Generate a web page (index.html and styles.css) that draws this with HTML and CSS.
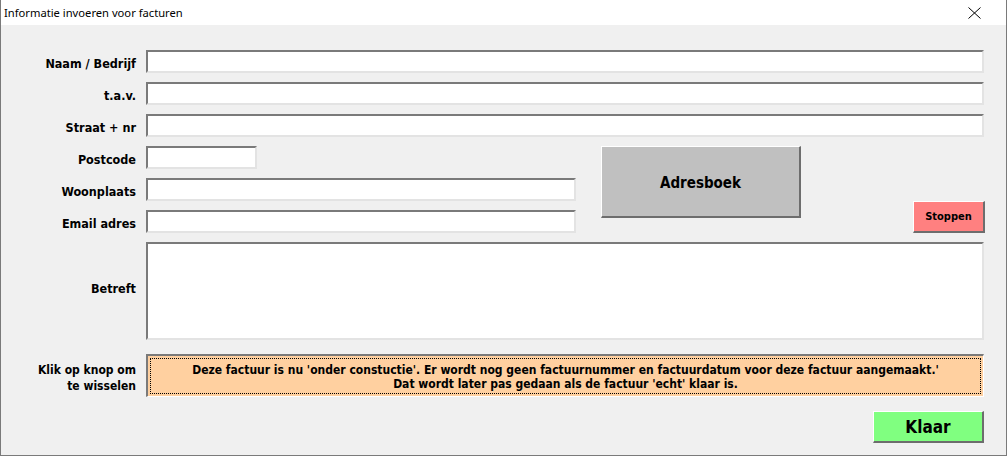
FILE: index.html
```html
<!DOCTYPE html>
<html lang="nl">
<head>
<meta charset="utf-8">
<title>Informatie invoeren voor facturen</title>
<link rel="stylesheet" href="styles.css">
</head>
<body>
<div class="window">
  <div class="titlebar">
    <span class="title">Informatie invoeren voor facturen</span>
    <svg class="close" width="13" height="12" viewBox="0 0 13 12"><path d="M0.5 0.5 L12.5 11.5 M12.5 0.5 L0.5 11.5" stroke="#000" stroke-width="1" fill="none"/></svg>
  </div>
  <div class="form">
    <label class="lbl r1">Naam / Bedrijf</label>
    <div class="field full r1"></div>

    <label class="lbl r2">t.a.v.</label>
    <div class="field full r2"></div>

    <label class="lbl r3">Straat + nr</label>
    <div class="field full r3"></div>

    <label class="lbl r4">Postcode</label>
    <div class="field postcode r4"></div>

    <label class="lbl r5">Woonplaats</label>
    <div class="field mid r5"></div>

    <label class="lbl r6">Email adres</label>
    <div class="field mid r6"></div>

    <button class="btn adresboek">Adresboek</button>
    <button class="btn stoppen">Stoppen</button>

    <label class="lbl lbl-big r7">Betreft</label>
    <div class="field full r7"></div>

    <label class="lbl lbl-top r8">Klik op knop om<br>te wisselen</label>
    <div class="toggle r8">
      <div class="toggle-inner">Deze factuur is nu 'onder constuctie'. Er wordt nog geen factuurnummer en factuurdatum voor deze factuur aangemaakt.'<br>Dat wordt later pas gedaan als de factuur 'echt' klaar is.</div>
    </div>

    <button class="btn klaar">Klaar</button>
  </div>
</div>
</body>
</html>
```
FILE: styles.css
```css
html, body {
  margin: 0;
  padding: 0;
}
body {
  width: 1007px;
  height: 456px;
  overflow: hidden;
  background: #ffffff;
}
.window {
  box-sizing: border-box;
  width: 1007px;
  height: 456px;
  border-left: 1px solid #7a7a7a;
  border-right: 1px solid #7a7a7a;
  border-bottom: 1px solid #7a7a7a;
  background: #f0f0f0;
  display: flex;
  flex-direction: column;
}
.titlebar {
  height: 25px;
  background: #ffffff;
  display: flex;
  align-items: center;
  justify-content: space-between;
  padding: 0 25px 0 3px;
  box-sizing: border-box;
}
.title {
  font-family: "Noto Sans", "Liberation Sans", sans-serif;
  font-size: 11.2px;
  color: #000;
  padding-bottom: 1px;
}
.close {
  display: block;
  margin-top: 1px;
}
.form {
  display: grid;
  grid-template-columns: 137px 430px 25px 200px 112px 71px;
  grid-template-rows: 23px 23px 23px 23px 23px 23px 98px auto auto;
  row-gap: 9px;
  padding: 25px 0 0 8px;
  font-family: "DejaVu Sans Condensed", "DejaVu Sans", sans-serif;
  font-weight: bold;
  font-size: 12.5px;
  color: #000;
}
.lbl {
  grid-column: 1;
  text-align: right;
  padding-right: 10px;
  padding-top: 3px;
  align-self: center;
  line-height: 15px;
}
.lbl-big {
  padding-top: 0;
  margin-top: -5px;
}
.lbl-top {
  align-self: start;
  padding-top: 0;
  margin-top: 13px;
  line-height: 16px;
  font-size: 12px;
}
.r1 { grid-row: 1; }
.r2 { grid-row: 2; }
.r3 { grid-row: 3; }
.r4 { grid-row: 4; }
.r5 { grid-row: 5; }
.r6 { grid-row: 6; }
.r7 { grid-row: 7; }
.r8 { grid-row: 8; }

.field {
  box-sizing: border-box;
  background: #ffffff;
  border-top: 2px solid #7a7a7a;
  border-left: 2px solid #7a7a7a;
  border-right: 2px solid #e3e3e3;
  border-bottom: 2px solid #e3e3e3;
}
.full { grid-column: 2 / 7; }
.mid { grid-column: 2; }
.postcode { grid-column: 2; width: 111px; }

.btn {
  box-sizing: border-box;
  font-family: "DejaVu Sans Condensed", "DejaVu Sans", sans-serif;
  font-weight: bold;
  color: #000;
  border-top: 1px solid #ffffff;
  border-left: 1px solid #ffffff;
  border-right: 2px solid #6d6d6d;
  border-bottom: 2px solid #6d6d6d;
  padding: 0;
  margin: 0;
}
.adresboek {
  grid-column: 4;
  grid-row: 4 / 7;
  align-self: start;
  height: 72px;
  background: #c0c0c0;
  font-size: 15px;
  padding-top: 2px;
}
.stoppen {
  grid-column: 6;
  grid-row: 5 / 7;
  align-self: end;
  justify-self: end;
  width: 72px;
  height: 32px;
  margin-right: -1px;
  background: #ff8080;
  font-size: 11px;
}
.toggle {
  grid-column: 2 / 7;
  margin-top: 5px;
  height: 43px;
  box-sizing: border-box;
  border-top: 2px solid #7a7a7a;
  border-left: 2px solid #7a7a7a;
  border-right: 1px solid #ffffff;
  border-bottom: 1px solid #ffffff;
  padding: 2px;
  background: #ffd0a0;
}
.toggle-inner {
  box-sizing: border-box;
  height: 100%;
  border: 1px dotted #000;
  text-align: center;
  font-size: 12px;
  line-height: 14px;
  padding-top: 4px;
}
.klaar {
  grid-column: 5 / 7;
  grid-row: 9;
  justify-self: end;
  width: 111px;
  height: 32px;
  margin-top: 5px;
  background: #80ff80;
  font-size: 17px;
}
```
